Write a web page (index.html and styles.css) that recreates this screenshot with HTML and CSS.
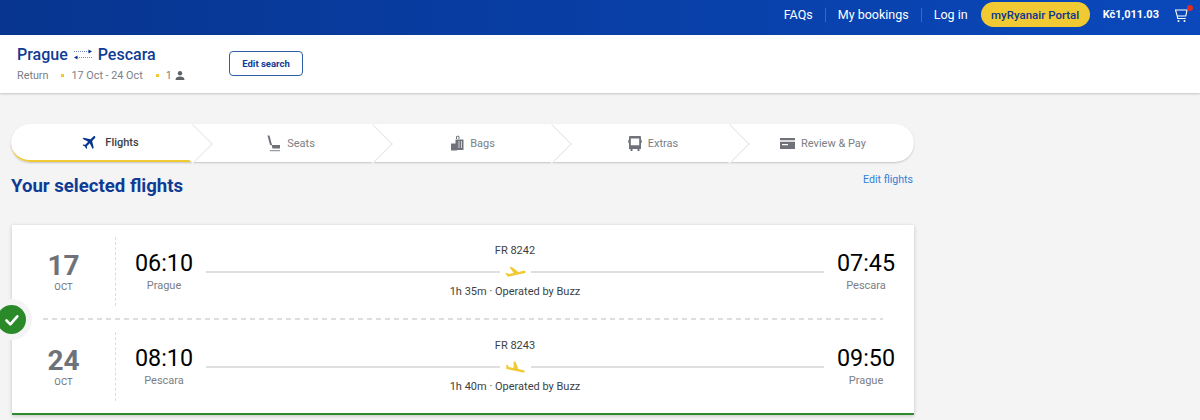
FILE: index.html
```html
<!DOCTYPE html>
<html lang="en">
<head>
    <meta charset="UTF-8">
    <title>Your selected flights</title>
    <link rel="stylesheet" href="styles.css">
</head>
<body>
    <header class="topbar">
        <a class="toplink">FAQs</a>
        <span class="topdivider"></span>
        <a class="toplink">My bookings</a>
        <span class="topdivider"></span>
        <a class="toplink">Log in</a>
        <button class="portal">myRyanair Portal</button>
        <span class="price">Kč1,011.03</span>
        <span class="cart">
            <svg width="13" height="14" viewBox="0 0 13 14" fill="none" stroke="#fff" stroke-width="1.1">
                <path d="M.5 1h11.500l-1.200 6H2.200zM2.200 7l.5 2.500h8"/>
                <circle cx="3.500" cy="12" r="1" fill="#fff" stroke="none"/>
                <circle cx="9.500" cy="12" r="1" fill="#fff" stroke="none"/>
            </svg>
            <span class="cart-dot"></span>
        </span>
    </header>

    <section class="summary">
        <div class="summary-text">
            <div class="route">
                <span>Prague</span>
                <svg width="20" height="12" viewBox="0 0 20 12" fill="none" stroke="#073590" stroke-width="1">
                    <path d="M1 3.500h15" stroke-dasharray="1 1" stroke-opacity=".55"/>
                    <path d="M15.500 1.500l3.500 2-3.500 2z" fill="#073590" stroke="none"/>
                    <path d="M4 9.500h15" stroke-dasharray="1 1" stroke-opacity=".55"/>
                    <path d="M4.500 7.500L1 9.500l3.500 2z" fill="#073590" stroke="none"/>
                </svg>
                <span>Pescara</span>
            </div>
            <div class="trip">
                <span>Return</span>
                <span class="dot"></span>
                <span>17 Oct - 24 Oct</span>
                <span class="dot"></span>
                <span class="pax">1
                    <svg width="10" height="9" viewBox="0 0 10 9" fill="#5f6368">
                        <circle cx="5" cy="2.300" r="2.200"/>
                        <path d="M.5 9c0-2.400 2-3.400 4.500-3.400S9.500 6.600 9.500 9z"/>
                    </svg>
                </span>
            </div>
        </div>
        <button class="edit-search">Edit search</button>
    </section>

    <main class="content">
        <nav class="steps">
            <div class="step step-active">
                <svg width="18" height="18" viewBox="0 0 24 24" fill="#073590" transform="rotate(45)">
                    <path d="M21 16v-2l-8-5V3.500c0-.83-.67-1.500-1.500-1.500S10 2.670 10 3.500V9l-8 5v2l8-2.500V19l-2 1.500V22l3.500-1 3.500 1v-1.500L13 19v-5.500l8 2.500z"/>
                </svg>
                <span>Flights</span>
            </div>
            <div class="step step-seats">
                <svg width="14" height="17" viewBox="0 0 14 17" fill="#6f7278">
                    <path d="M.5 .5h2l2.500 9.500h-2z"/>
                    <path d="M4.500 10h8.500v3.500H5.500z"/>
                    <path d="M2.500 15h10.500v1.200H3z" fill-opacity=".7"/>
                </svg>
                <span>Seats</span>
            </div>
            <div class="step step-bags">
                <svg width="13" height="16" viewBox="0 0 13 16" fill="#6f7278">
                    <path d="M5 4V1.800C5 .3 8.500 .3 8.500 1.800V4h-1V2C7.500 1.300 6 1.300 6 2v2z"/>
                    <path d="M4.500 4.500h8V15h-8z"/>
                    <path d="M0 8.500h6V15.500H0z"/>
                    <path d="M8 6v7M10.500 6v7" stroke="#fff" stroke-width=".7"/>
                </svg>
                <span>Bags</span>
            </div>
            <div class="step step-extras">
                <svg width="14" height="15" viewBox="0 0 14 15" fill="#6f7278">
                    <path fill-rule="evenodd" d="M2 0h10a1 1 0 0 1 1 1v12h-1.500v2h-2v-2h-5v2h-2v-2H1V1a1 1 0 0 1 1-1zM2.800 2.500v6.800h8.400V2.500z"/>
                    <path d="M0 4h.7v3H0zM13.300 4h.7v3h-.7z"/>
                </svg>
                <span>Extras</span>
            </div>
            <div class="step step-review">
                <svg width="15" height="11" viewBox="0 0 15 11" fill="#6f7278">
                    <path fill-rule="evenodd" d="M0 0h15v11H0zM0 2.200v1.600h15V2.200zM2 6v1.200h6V6z"/>
                </svg>
                <span>Review &amp; Pay</span>
            </div>
        </nav>

        <div class="selected-head">
            <h1>Your selected flights</h1>
            <a class="edit-flights">Edit flights</a>
        </div>

        <section class="card">
            <div class="leg">
                <div class="date">
                    <strong>17</strong>
                    <span>OCT</span>
                </div>
                <div class="times">
                    <div class="place">
                        <strong>06:10</strong>
                        <span>Prague</span>
                    </div>
                    <div class="path">
                        <span class="path-text">FR 8242</span>
                        <div class="path-line">
                            <svg width="31" height="24" viewBox="-3.500 -5 31 30" preserveAspectRatio="none" fill="#f1c933">
                                <path d="M22.070 9.640c-.21-.8-1.040-1.280-1.840-1.060L14.920 10l-6.900-6.430-1.930.51 4.140 7.170-4.970 1.330-1.970-1.540-1.450.39 1.820 3.160.77 1.330 1.600-.43 5.310-1.420 4.350-1.160L21 11.490c.81-.23 1.280-1.050 1.070-1.850z"/>
                            </svg>
                        </div>
                        <span class="path-text">1h 35m · Operated by Buzz</span>
                    </div>
                    <div class="place">
                        <strong>07:45</strong>
                        <span>Pescara</span>
                    </div>
                </div>
            </div>
            <div class="leg-divider"></div>
            <div class="leg">
                <div class="date">
                    <strong>24</strong>
                    <span>OCT</span>
                </div>
                <div class="times">
                    <div class="place">
                        <strong>08:10</strong>
                        <span>Pescara</span>
                    </div>
                    <div class="path">
                        <span class="path-text">FR 8243</span>
                        <div class="path-line">
                            <svg width="31" height="24" viewBox="-3.500 -6 31 30" preserveAspectRatio="none" fill="#f1c933">
                                <path d="M9.680 13.270l4.350 1.160 5.310 1.420c.8.210 1.620-.26 1.840-1.060.21-.8-.26-1.620-1.060-1.840l-5.310-1.420-2.760-9.020L10.120 2v8.280L5.150 8.950l-.93-2.320-1.450-.39v5.170l1.600.43 5.310 1.430z"/>
                            </svg>
                        </div>
                        <span class="path-text">1h 40m · Operated by Buzz</span>
                    </div>
                    <div class="place">
                        <strong>09:50</strong>
                        <span>Prague</span>
                    </div>
                </div>
            </div>
            <div class="check">
                <svg width="16" height="14" viewBox="0 0 16 14" fill="none" stroke="#fff" stroke-width="2.600" stroke-linecap="round" stroke-linejoin="round">
                    <path d="M2.500 7.500l3.800 3.800 7-8"/>
                </svg>
            </div>
        </section>
    </main>
</body>
</html>
```

FILE: styles.css
```css
* {
    box-sizing: border-box;
}

html, body {
    height: 420px;
    overflow: hidden;
}

body {
    margin: 0;
    background: #f4f4f4;
    font-family: Roboto, "Liberation Sans", sans-serif;
    color: #202124;
}

button {
    font-family: inherit;
    cursor: pointer;
}

/* top bar */
.topbar {
    height: 35px;
    padding: 2px 12px 8px 0;
    display: flex;
    align-items: center;
    justify-content: flex-end;
    background: linear-gradient(90deg, #073590, #0a48bb);
    color: #fff;
}

.toplink {
    font-size: 12.500px;
}

.topdivider {
    width: 1px;
    height: 14px;
    margin: 0 12px;
    background: rgba(255, 255, 255, 0.2);
}

.portal {
    width: 109px;
    height: 25px;
    margin-left: 13px;
    border: none;
    border-radius: 13px;
    background: #f1c933;
    color: #073590;
    font-size: 11.500px;
    font-weight: 500;
}

.price {
    margin-left: 13px;
    font-size: 11px;
    font-weight: 700;
}

.cart {
    position: relative;
    display: flex;
    margin-left: 16px;
    margin-top: 2px;
}

.cart-dot {
    position: absolute;
    top: -4px;
    right: -5px;
    width: 6px;
    height: 6px;
    border-radius: 50%;
    background: #e02b20;
}

/* search summary */
.summary {
    height: 58px;
    padding: 0 0 0 17px;
    display: flex;
    align-items: center;
    background: #fff;
    box-shadow: 0 1px 2px rgba(0, 0, 0, 0.2);
}

.summary-text {
    width: 212px;
    margin-top: -2px;
}

.route {
    display: flex;
    align-items: center;
    gap: 5px;
    color: #0f3b94;
    font-size: 16px;
    font-weight: 500;
}

.trip {
    margin-top: 5px;
    display: flex;
    align-items: center;
    color: #7b7e84;
    font-size: 10.800px;
}

.dot {
    width: 3px;
    height: 3px;
    margin: 0 7px 0 13px;
    background: #f1c933;
}

.pax {
    display: flex;
    align-items: center;
    gap: 3px;
}

.edit-search {
    width: 74px;
    height: 25px;
    margin-top: -2px;
    border: 1px solid #2f5ea8;
    border-radius: 4px;
    background: #fff;
    color: #0f3b94;
    font-size: 9.500px;
    font-weight: 700;
}

/* stepper */
.content {
    width: 903px;
    margin-left: 11px;
}

.steps {
    margin-top: 31px;
    height: 38px;
    display: grid;
    grid-template-columns: 182px 180px 179px 178px 184px;
    background: #fff;
    border-radius: 19px;
    box-shadow: 0 1px 2px rgba(0, 0, 0, 0.2);
}

.step {
    position: relative;
    display: flex;
    align-items: center;
    justify-content: center;
    gap: 6px;
    color: #7b7e84;
    font-size: 11px;
}

.step:not(:last-child)::after {
    content: "";
    position: absolute;
    z-index: 1;
    top: 5.500px;
    right: -13.500px;
    width: 27px;
    height: 27px;
    background: #fff;
    border-top: 1px solid #e6e6e6;
    border-right: 1px solid #e6e6e6;
    transform: rotate(45deg);
}

.step-active {
    padding-left: 16px;
    color: #3c3f44;
    font-weight: 500;
    border-radius: 19px 0 0 19px;
    border-bottom: 2px solid #f1c933;
}

.step-seats {
    padding-left: 16px;
}

.step-bags {
    padding-left: 21px;
}

.step-extras {
    padding-left: 24px;
}

.step-review {
    padding-left: 2px;
}

/* heading */
.selected-head {
    height: 63px;
    display: flex;
    justify-content: space-between;
}

.selected-head h1 {
    margin: 13px 0 0;
    color: #0f3b94;
    font-size: 18.600px;
    font-weight: 700;
    line-height: 22px;
}

.edit-flights {
    margin: 11px 1px 0 0;
    color: #2f80d8;
    font-size: 10.600px;
    line-height: 14px;
}

/* flight card */
.card {
    position: relative;
    height: 190px;
    margin-left: 1px;
    padding: 12px 19px 0 0;
    background: #fff;
    border-bottom: 2px solid #2e8b2e;
    box-shadow: 0 1px 4px rgba(0, 0, 0, 0.2);
}

.leg {
    height: 69px;
    display: flex;
}

.date {
    width: 104px;
    padding-top: 13px;
    display: flex;
    flex-direction: column;
    align-items: center;
    border-right: 1px dashed #dcdcdc;
    color: #6f7278;
}

.date strong {
    font-size: 28px;
    line-height: 31px;
    font-weight: 700;
}

.date span {
    font-size: 9.500px;
    line-height: 12px;
}

.times {
    flex: 1;
    padding-left: 19px;
    display: flex;
}

.place {
    width: 58px;
    padding-top: 12px;
    display: flex;
    flex-direction: column;
    align-items: center;
}

.place strong {
    color: #000;
    font-size: 23.300px;
    font-weight: 400;
    line-height: 28px;
}

.place span {
    margin-top: 2px;
    color: #7b7e84;
    font-size: 11px;
    line-height: 13px;
}

.path {
    flex: 1;
    margin: 0 13px;
    padding-top: 7px;
    display: flex;
    flex-direction: column;
    align-items: center;
}

.path-text {
    font-size: 11px;
    line-height: 14px;
    color: #3c3f44;
}

.path-line {
    width: 100%;
    height: 27px;
    display: flex;
    align-items: center;
    justify-content: center;
    background: linear-gradient(#dfdfdf, #dfdfdf) center / 100% 2px no-repeat;
}

.path-line svg {
    background: #fff;
}

.leg-divider {
    height: 26px;
    margin: 0 12px 0 31px;
    background: repeating-linear-gradient(90deg, #dedede 0 5px, transparent 5px 9px) center / 100% 2px no-repeat;
}

.check {
    position: absolute;
    top: 80px;
    left: -15px;
    width: 29px;
    height: 29px;
    display: flex;
    align-items: center;
    justify-content: center;
    border-radius: 50%;
    background: #2a8a2a;
    box-shadow: 0 0 0 6px #f4f4f4;
}
```
